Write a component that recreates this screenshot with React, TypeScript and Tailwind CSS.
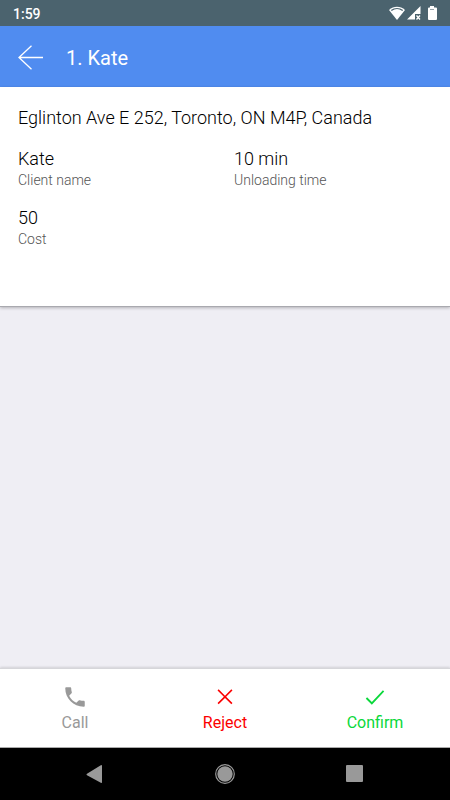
type Field = {
  label: string;
  value: string;
};

type Action = {
  label: string;
  color: string;
  path: string;
};

const fields: Field[] = [
  { label: 'Client name', value: 'Kate' },
  { label: 'Unloading time', value: '10 min' },
  { label: 'Cost', value: '50' },
];

const actions: Action[] = [
  {
    label: 'Call',
    color: 'text-[#999999]',
    path: 'M6.62 10.79c1.44 2.83 3.76 5.14 6.59 6.59l2.2-2.2c.27-.27.67-.36 1.02-.24 1.12.37 2.33.57 3.57.57.55 0 1 .45 1 1V20c0 .55-.45 1-1 1C10.61 21 3 13.39 3 4c0-.55.45-1 1-1h3.5c.55 0 1 .45 1 1 0 1.25.2 2.45.57 3.57.11.35.03.74-.25 1.02l-2.2 2.2z',
  },
  {
    label: 'Reject',
    color: 'text-[#fb0000]',
    path: 'M18.9 5.95 17.850 4.900 12 10.750 6.150 4.900 5.100 5.950 10.950 11.800 5.100 17.650 6.150 18.700 12 12.850 17.850 18.700 18.900 17.650 13.050 11.800z',
  },
  {
    label: 'Confirm',
    color: 'text-[#0bd83b]',
    path: 'M9.100 16.700 4.700 12.300 3.500 13.500 9.100 19.100 20.500 7 19.300 5.800z',
  },
];

function StatusBar() {
  return (
    <div className="flex h-[26px] items-center justify-between bg-[#4b636e] pl-[13px] pr-[11px] text-white">
      <span className="pt-px text-sm font-medium leading-5">1:59</span>
      <div className="flex items-center gap-0.5">
        <svg width="16" height="14" viewBox="0 0 16 14" aria-hidden="true">
          <path d="M8 14 0 4C4.600 -.3 11.400 -.3 16 4z" fill="currentColor" />
          <path d="M2.300 4.600C5.700 1.900 10.300 1.900 13.700 4.600" fill="none" stroke="#4b636e" strokeWidth="1.300" />
        </svg>
        <svg width="16" height="14" viewBox="0 0 16 14" aria-hidden="true">
          <path d="M13.500 0v8H8v5.500H0z" fill="currentColor" />
          <path d="m9.500 9.500 3.500 4m0-4-3.500 4" stroke="currentColor" strokeWidth="1.300" />
        </svg>
        <svg width="14" height="16" viewBox="0 0 14 16" aria-hidden="true">
          <path d="M5 1h4v1.500h2q1 0 1 1V14q0 1-1 1H4q-1 0-1-1V3.500q0-1 1-1h1z" fill="currentColor" />
          <path d="M5 4.500h4" stroke="#4b636e" strokeWidth=".6" />
        </svg>
      </div>
    </div>
  );
}

function Header() {
  return (
    <header className="flex h-[61px] items-center gap-[22px] bg-[#508cf0] px-[17px] pt-0.5 text-white">
      <button type="button" aria-label="Back">
        <svg width="27" height="26" viewBox="0 0 27 26" fill="none" stroke="currentColor" strokeWidth="1.300" aria-hidden="true">
          <path d="M26 12.500H2M14.500 .8 2 12.500l12.500 11.700" />
        </svg>
      </button>
      <h1 className="text-xl leading-6">1. Kate</h1>
    </header>
  );
}

function Details() {
  return (
    <section className="border-b border-[#a9a9af] bg-white px-[18px] pt-[19px] pb-[58px] shadow-[0_1px_3px_rgba(0,0,0,0.25)]">
      <h2 className="text-lg font-light leading-6 text-black">Eglinton Ave E 252, Toronto, ON M4P, Canada</h2>
      <dl className="mt-[17px] grid grid-cols-2 gap-x-[18px] gap-y-[17px]">
        {fields.map((field) => (
          <div key={field.label} className="flex flex-col-reverse">
            <dt className="text-sm font-light leading-[18px] text-[#555555]">{field.label}</dt>
            <dd className="text-lg font-light leading-6 text-black">{field.value}</dd>
          </div>
        ))}
      </dl>
    </section>
  );
}

function ActionBar() {
  return (
    <div className="grid h-20 grid-cols-3 border-t border-b border-t-[#d6d6da] border-b-[#aaaaaa] bg-white shadow-[0_-1px_2px_rgba(0,0,0,0.12)]">
      {actions.map((action) => (
        <button
          key={action.label}
          type="button"
          className={`flex flex-col items-center pt-[15px] ${action.color}`}
        >
          <svg width="26" height="26" viewBox="0 0 24 24" fill="currentColor" aria-hidden="true">
            <path d={action.path} />
          </svg>
          <span className="mt-px text-base leading-6">{action.label}</span>
        </button>
      ))}
    </div>
  );
}

function SystemNav() {
  return (
    <nav className="flex h-[52px] items-center justify-center gap-[102px] bg-black text-[#999999]">
      <button type="button" aria-label="System back">
        <svg width="28" height="24" viewBox="0 0 28 24" fill="currentColor" aria-hidden="true">
          <path d="M21 4v16q0 1.400-1.200.700L6 13.200q-1.200-.7 0-1.500L19.800 3.200Q21 2.700 21 4z" />
        </svg>
      </button>
      <button type="button" aria-label="Home">
        <svg width="28" height="24" viewBox="0 0 28 24" aria-hidden="true">
          <circle cx="14" cy="12" r="9.300" fill="none" stroke="currentColor" strokeWidth="1.200" />
          <circle cx="14" cy="12" r="7.700" fill="currentColor" />
        </svg>
      </button>
      <button type="button" aria-label="Recent apps">
        <svg width="28" height="24" viewBox="0 0 28 24" aria-hidden="true">
          <rect x="5" y="3" width="17" height="17" rx="1" fill="currentColor" />
        </svg>
      </button>
    </nav>
  );
}

export default function App() {
  return (
    <div className="flex min-h-screen flex-col bg-[#efeef4] font-['Roboto',sans-serif]">
      <StatusBar />
      <Header />
      <main className="flex-1">
        <Details />
      </main>
      <ActionBar />
      <SystemNav />
    </div>
  );
}
